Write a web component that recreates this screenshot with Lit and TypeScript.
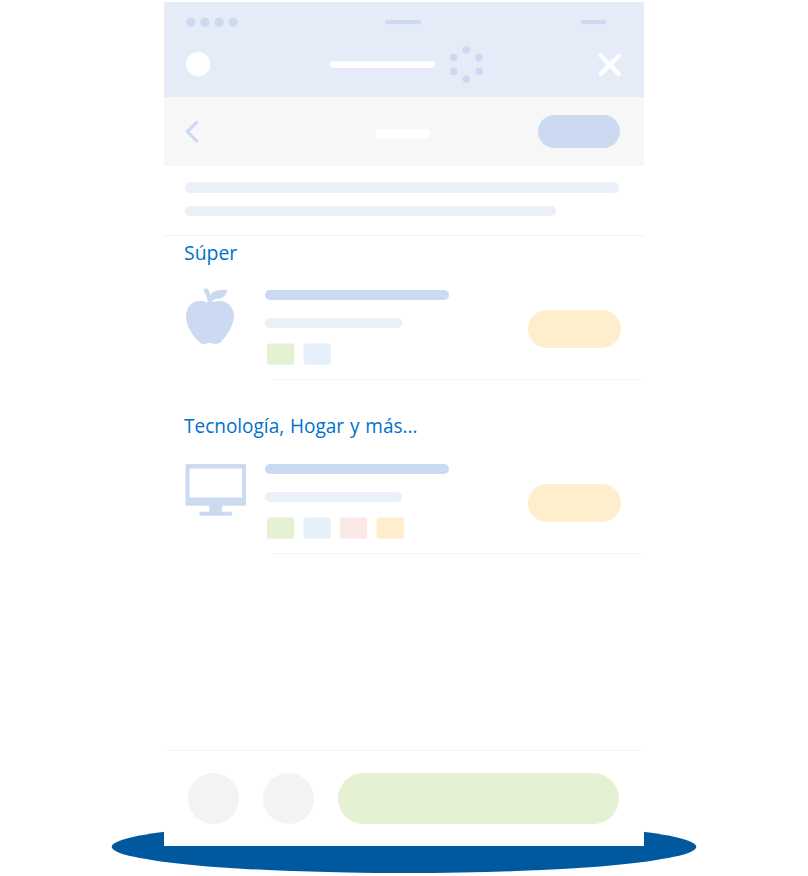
import { LitElement, html, css, svg, TemplateResult } from "lit";
import { customElement, property } from "lit/decorators.js";

const appleIcon = html`<svg width="50" height="58" viewBox="0 0 50 58" fill="#cbdaf1">
  <path d="M18.800 3.200C18.300 1.400 19.500 0.200 21 0.200C23.400 0.200 24.700 4.500 25.300 7.200C28 2.400 33 1.800 42.300 1.700C41.800 6 39 10.300 33.500 10.700C30 10.900 27.500 11.600 26.600 14.600C30 13 34 12.600 37.500 13.300C44 14.600 49 20.500 49 28.500C49 36.500 41 49.500 35 54.500C32 56.700 29.500 55.800 27 55.300C25.500 55 24 55 22.500 55.300C20.500 56.200 17.500 56.500 15 54.500C8 49.500 1 37 1 28.500C1 20 6 14.600 11.500 13.300C15.500 12.500 19.500 13 22.700 14.800C22.600 10 21 6.500 18.800 3.200Z"/>
</svg>`;

const monitorIcon = html`<svg width="62" height="55" viewBox="0 -2 62 55" fill="#cbdaf1">
  <path fill-rule="evenodd" d="M1.800 0H59.700Q61 0 61 1.300V40.500Q61 41.800 59.700 41.800H37V47.700H45.300A2.050 2.050 0 0 1 45.300 51.800H16.200A2.050 2.050 0 0 1 16.200 47.700H24.300V41.800H1.800Q.5 41.800 .5 40.500V1.300Q.5 0 1.800 0ZM4.500 4.600V33.400H57V4.600Z"/>
</svg>`;

@customElement("category-section")
class CategorySection extends LitElement {
  @property() label = "";
  @property({ type: Number }) labelWidth = 0;
  @property({ type: Number }) baseline = 24;
  @property({ attribute: false }) icon: TemplateResult | null = null;
  @property({ attribute: false }) swatches: string[] = [];

  static styles = css`
    :host { display: block; }
    svg { display: block; }
    .label { font-family: "Open Sans", "Noto Sans", sans-serif; font-size: 20px; word-spacing: 1px; fill: #0071ce; }
    .row { display: flex; height: 105px; padding: 0 23px 0 21px; }
    .icon { width: 80px; padding-top: 14px; }
    .details { flex: 1; padding-top: 16px; }
    .name { width: 184px; height: 10px; border-radius: 5px; background: #cbdaf1; }
    .info { width: 137px; height: 10px; margin-top: 18px; border-radius: 5px; background: #eaeff8; }
    .swatches { display: block; height: 22px; margin: 15px 0 0 2px; }
    .green { fill: #e4f1d3; }
    .blue { fill: #e5f0fa; }
    .red { fill: #fbe9e7; }
    .yellow { fill: #ffeecd; }
    .action { width: 93px; height: 38px; margin-top: 36px; border-radius: 19px; background: #ffeecd; }
    .divider { height: 1px; margin-left: 108px; background: #f6f6f7; }
  `;

  render() {
    return html`
      <svg width="300" height="38">
        <text class="label" x="20" y=${this.baseline} textLength=${this.labelWidth} lengthAdjust="spacingAndGlyphs">${this.label}</text>
      </svg>
      <div class="row">
        <div class="icon">${this.icon}</div>
        <div class="details">
          <div class="name"></div>
          <div class="info"></div>
          <svg class="swatches" width="140" height="22">
            ${this.swatches.map((c, i) => svg`<rect class=${c} x=${i * 36.5} y="0.400" width="27.300" height="21.300" rx="2.500" />`)}
          </svg>
        </div>
        <div class="action"></div>
      </div>
      <div class="divider"></div>
    `;
  }
}

@customElement("app-root")
class AppRoot extends LitElement {
  static styles = css`
    :host { display: block; position: relative; width: 808px; height: 876px; overflow: hidden; background: #fff; }
    svg { display: block; }
    .shadow { position: absolute; left: 0; bottom: 0; }
    .phone { position: relative; display: flex; flex-direction: column; box-sizing: border-box; width: 480px; height: 844px; margin-left: 164px; top: 2px; background: #fff; }
    .header { height: 95px; background: #e5ecf8; }
    .intro { height: 69px; padding: 16px 0 0 21px; box-sizing: border-box; display: flex; flex-direction: column; gap: 13px; }
    .line { height: 10.500px; border-radius: 5px; background: #eaeff8; }
    .long { width: 434px; }
    .short { width: 371px; }
    .subheader { display: flex; align-items: center; justify-content: space-between; height: 69px; box-sizing: border-box; padding: 0 24px 0 21px; background: #f7f7f7; }
    .side { width: 82px; }
    .title { width: 55px; height: 10px; margin: 5px 1px 0 0; border-radius: 5px; background: #fff; }
    .button { width: 82px; height: 33px; border-radius: 17px; background: #cbdaf1; }
    .rule { height: 1px; background: #f4f4f5; }
    .second { margin-top: 30px; }
    .footer { display: flex; align-items: flex-start; gap: 24px; height: 96px; box-sizing: border-box; margin-top: auto; padding: 22px 25px 0 24px; border-top: 1px solid #f6f6f7; }
    .circle { width: 51px; height: 51px; border-radius: 50%; background: #f3f3f3; }
    .confirm { flex: 1; height: 51px; border-radius: 26px; background: #e4f1d3; }
  `;

  render() {
    const statusDots = [26.7, 40.9, 55.1, 69.3];
    const spinnerDots = [[302.4, 48], [289.7, 55.5], [315.1, 55.5], [289.7, 69.4], [315.1, 69.4], [302.4, 77]];
    return html`
      <svg class="shadow" width="808" height="60" viewBox="0 816 808 60">
        <ellipse cx="404" cy="846.800" rx="292.300" ry="26.300" fill="#00589f" />
      </svg>
      <div class="phone">
        <div class="header">
          <svg width="480" height="95" fill="#cbdaf1">
            ${statusDots.map((x) => svg`<circle cx=${x} cy="20.200" r="4.700" />`)}
            <rect x="221" y="18.100" width="36" height="4.200" rx="2.100" />
            <rect x="417" y="18.100" width="25.300" height="4.200" rx="2.100" />
            <circle cx="34.200" cy="62.200" r="12.200" fill="#fff" />
            <rect x="166" y="59.300" width="105" height="6.500" rx="3.250" fill="#fff" />
            ${spinnerDots.map(([x, y]) => svg`<circle cx=${x} cy=${y} r="3.800" />`)}
            <path d="M436.800 53.700L455 71.900M455 53.700L436.800 71.900" fill="none" stroke="#fff" stroke-width="4.300" stroke-linecap="round" />
          </svg>
        </div>
        <div class="subheader">
          <div class="side">
            <svg width="16" height="24" fill="none" stroke="#cbdaf1" stroke-width="3.200" stroke-linecap="round" stroke-linejoin="round">
              <path d="M11.600 2.500L2.300 11.700L11.600 20.900" />
            </svg>
          </div>
          <div class="title"></div>
          <div class="button"></div>
        </div>
        <div class="intro">
          <div class="line long"></div>
          <div class="line short"></div>
        </div>
        <div class="rule"></div>
        <category-section label="Súper" .labelWidth=${53.3} .icon=${appleIcon} .swatches=${["green", "blue"]}></category-section>
        <category-section class="second" label="Tecnología, Hogar y más..." .labelWidth=${233.5} .baseline=${23} .icon=${monitorIcon}
          .swatches=${["green", "blue", "red", "yellow"]}></category-section>
        <div class="footer">
          <div class="circle"></div>
          <div class="circle"></div>
          <div class="confirm"></div>
        </div>
      </div>
    `;
  }
}
